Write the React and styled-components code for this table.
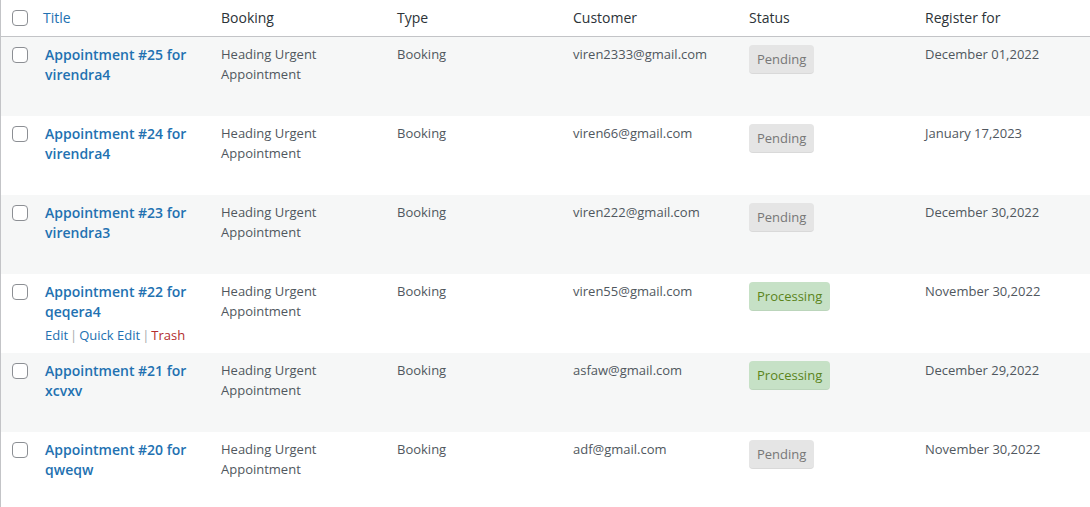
import React from "react";
import styled, { createGlobalStyle } from "styled-components";

const Global = createGlobalStyle`
  html, body { margin: 0; padding: 0; background: #fff; }
  body { font-family: "Open Sans", "Noto Sans", sans-serif; color: #50575e; overflow: hidden; }
`;

const Wrap = styled.div`
  width: 1092px;
  border-left: 1px solid #c3c4c7;
`;

const Table = styled.table`
  width: 1091px;
  table-layout: fixed;
  border-collapse: collapse;
  border-spacing: 0;
`;

const Col = styled.col`
  width: ${(p) => p.$w}px;
`;

const Th = styled.th`
  text-align: left;
  font-weight: 400;
  font-size: 14px;
  line-height: 20px;
  color: #2c3338;
  padding: 8px 10px;
  height: 20px;
  border-bottom: 1px solid #c3c4c7;
  vertical-align: middle;
`;

const CheckTh = styled(Th)`
  padding: 8px 0 8px 11px;
`;

const SortLink = styled.a`
  color: #2271b1;
  text-decoration: none;
  margin-left: -2px;
`;

const Tr = styled.tr`
  height: 79px;
  background: ${(p) => (p.$alt ? "#f6f7f7" : "#fff")};
`;

const Td = styled.td`
  vertical-align: top;
  padding: 8px 10px;
  font-size: 13px;
  line-height: 19.5px;
  color: #50575e;
  box-sizing: border-box;
  height: 79px;
`;

const CheckTd = styled(Td)`
  padding: 10px 0 8px 11px;
`;

const Box = styled.span`
  display: block;
  width: 14px;
  height: 14px;
  border: 1px solid #8c8f94;
  border-radius: 4px;
  background: #fff;
`;

const TitleLink = styled.a`
  display: block;
  font-size: 14px;
  font-weight: 600;
  line-height: 19.5px;
  color: #2271b1;
  text-decoration: none;
`;

const Actions = styled.div`
  margin-top: 5px;
  font-size: 13px;
  line-height: 19px;
  color: #a7aaad;
  visibility: ${(p) => (p.$show ? "visible" : "hidden")};
  white-space: nowrap;
`;

const ActionLink = styled.a`
  color: ${(p) => (p.$danger ? "#b32d2e" : "#2271b1")};
  text-decoration: none;
`;

const Sep = styled.span`
  margin: 0 2px;
`;

const Badge = styled.mark`
  display: inline-flex;
  vertical-align: top;
  height: 29px;
  align-items: center;
  padding: 0 8px;
  border-radius: 4px;
  font-size: 13px;
  line-height: 1;
  color: ${(p) => (p.$done ? "#5b841b" : "#777")};
  background: ${(p) => (p.$done ? "#c6e1c6" : "#e5e5e5")};
  border-bottom: 1px solid rgba(0, 0, 0, 0.05);
  box-sizing: border-box;
`;

const rows = [
  { n: 25, who: "virendra4", mail: "viren2333@gmail.com", st: "Pending", date: "December 01,2022" },
  { n: 24, who: "virendra4", mail: "viren66@gmail.com", st: "Pending", date: "January 17,2023" },
  { n: 23, who: "virendra3", mail: "viren222@gmail.com", st: "Pending", date: "December 30,2022" },
  { n: 22, who: "qeqera4", mail: "viren55@gmail.com", st: "Processing", date: "November 30,2022", hover: true },
  { n: 21, who: "xcvxv", mail: "asfaw@gmail.com", st: "Processing", date: "December 29,2022" },
  { n: 20, who: "qweqw", mail: "adf@gmail.com", st: "Pending", date: "November 30,2022" },
];

export default function App() {
  return (
    <Wrap>
      <Global />
      <Table>
        <colgroup>
          <Col $w={34} />
          <Col $w={176} />
          <Col $w={176} />
          <Col $w={176} />
          <Col $w={176} />
          <Col $w={176} />
          <Col $w={177} />
        </colgroup>
        <thead>
          <tr>
            <CheckTh><Box /></CheckTh>
            <Th><SortLink href="#">Title</SortLink></Th>
            <Th>Booking</Th>
            <Th>Type</Th>
            <Th>Customer</Th>
            <Th>Status</Th>
            <Th>Register for</Th>
          </tr>
        </thead>
        <tbody>
          {rows.map((r, i) => (
            <Tr key={r.n} $alt={i % 2 === 0}>
              <CheckTd><Box /></CheckTd>
              <Td>
                <TitleLink href="#">Appointment #{r.n} for {r.who}</TitleLink>
                <Actions $show={r.hover}>
                  <ActionLink href="#">Edit</ActionLink>
                  <Sep>|</Sep>
                  <ActionLink href="#">Quick Edit</ActionLink>
                  <Sep>|</Sep>
                  <ActionLink href="#" $danger>Trash</ActionLink>
                </Actions>
              </Td>
              <Td>Heading Urgent Appointment</Td>
              <Td>Booking</Td>
              <Td>{r.mail}</Td>
              <Td>
                <Badge $done={r.st === "Processing"}>{r.st}</Badge>
              </Td>
              <Td>{r.date}</Td>
            </Tr>
          ))}
        </tbody>
      </Table>
    </Wrap>
  );
}
